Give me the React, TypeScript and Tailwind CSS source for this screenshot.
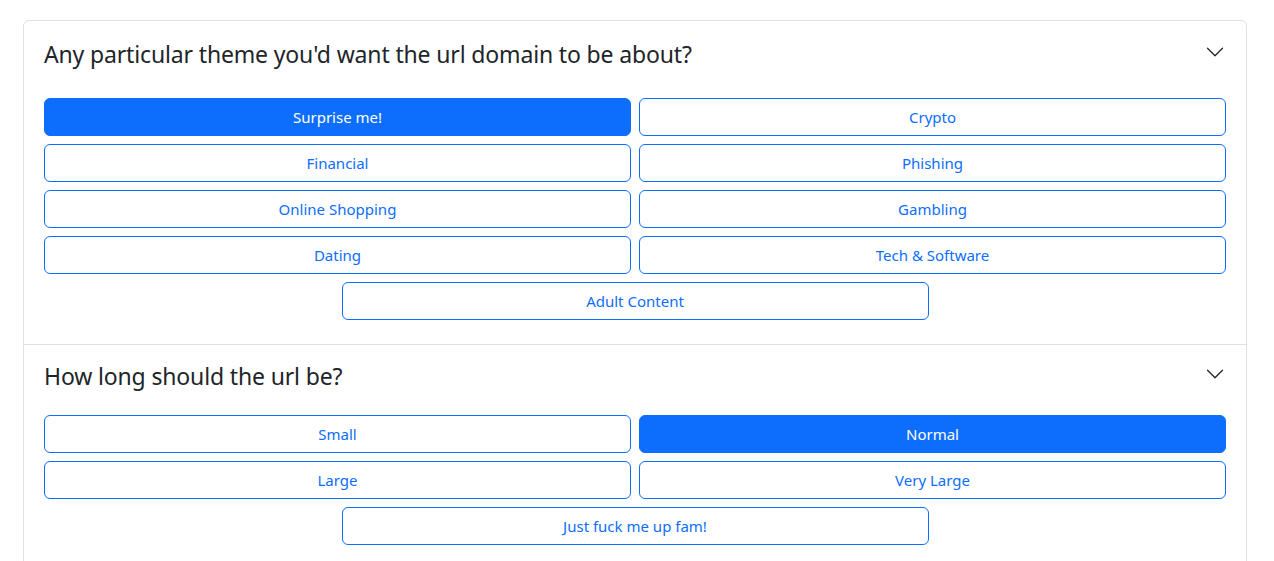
import React, { useState } from "react";

const themes = [
  "Surprise me!",
  "Crypto",
  "Financial",
  "Phishing",
  "Online Shopping",
  "Gambling",
  "Dating",
  "Tech & Software",
  "Adult Content",
];

const lengths = ["Small", "Normal", "Large", "Very Large", "Just fuck me up fam!"];

function Chevron() {
  return (
    <svg width="20" height="20" viewBox="0 0 16 16" fill="#212529" className="shrink-0 mb-[4px]">
      <path
        fillRule="evenodd"
        d="M1.646 4.646a.5.5 0 0 1 .708 0L8 10.293l5.646-5.647a.5.5 0 0 1 .708.708l-6 6a.5.5 0 0 1-.708 0l-6-6a.5.5 0 0 1 0-.708z"
      />
    </svg>
  );
}

function Option({ label, active, onClick }: { label: string; active: boolean; onClick: () => void }) {
  return (
    <button
      onClick={onClick}
      className={
        active
          ? "h-[38px] rounded-[6px] border border-[#0d6efd] bg-[#0d6efd] text-white text-[15px] pt-[1px]"
          : "h-[38px] rounded-[6px] border border-[#0d6efd] bg-white text-[#0d6efd] text-[15px] pt-[1px] hover:bg-[#0d6efd] hover:text-white"
      }
    >
      {label}
    </button>
  );
}

function Section({
  title,
  options,
  selected,
  onSelect,
  headerClass,
  bodyClass,
}: {
  title: string;
  options: string[];
  selected: string;
  onSelect: (v: string) => void;
  headerClass: string;
  bodyClass: string;
}) {
  const last = options.length % 2 === 1 ? options[options.length - 1] : null;
  const paired = last ? options.slice(0, -1) : options;
  return (
    <div>
      <div className={"flex items-center justify-between pl-5 pr-[21px] " + headerClass}>
        <h2 className="text-[23px] leading-[36px] tracking-[-0.15px] text-[#212529]">{title}</h2>
        <Chevron />
      </div>
      <div className={"px-5 " + bodyClass}>
        <div className="grid grid-cols-2 gap-2">
          {paired.map((o) => (
            <Option key={o} label={o} active={selected === o} onClick={() => onSelect(o)} />
          ))}
        </div>
        {last && (
          <div className="mt-2 flex justify-center">
            <div className="w-[587px] grid">
              <Option label={last} active={selected === last} onClick={() => onSelect(last)} />
            </div>
          </div>
        )}
      </div>
    </div>
  );
}

export default function App() {
  const [theme, setTheme] = useState("Surprise me!");
  const [length, setLength] = useState("Normal");

  return (
    <div className="min-h-[561px] bg-white pt-[20px] pl-[23px] font-['Noto_Sans',sans-serif]">
      <div className="w-[1224px] rounded-[6px] border border-[#dee2e6] overflow-hidden">
        <Section
          title="Any particular theme you'd want the url domain to be about?"
          options={themes}
          selected={theme}
          onSelect={setTheme}
          headerClass="pt-[15px] pb-[0px]"
          bodyClass="pt-[26px] pb-[24px]"
        />
        <div className="border-t border-[#dee2e6]">
          <Section
            title="How long should the url be?"
            options={lengths}
            selected={length}
            onSelect={setLength}
            headerClass="pt-[13px] pb-[0px]"
            bodyClass="pt-[21px] pb-[24px]"
          />
        </div>
      </div>
    </div>
  );
}
